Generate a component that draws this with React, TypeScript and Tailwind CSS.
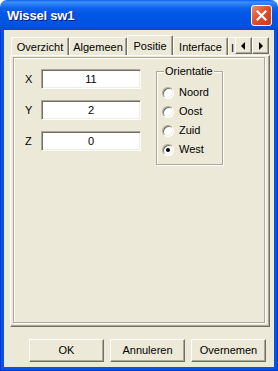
import React from 'react';

const ui = "font-['Liberation_Sans',Arial,sans-serif] text-[11px] text-black";

function Field({ value }: { value: string }) {
  return (
    <div className="w-[100px] h-[20px] bg-white border border-[#ACA899] border-r-white border-b-white shadow-[inset_1px_1px_0_#716F64,inset_-1px_-1px_0_#F1EFE2] flex items-center justify-center">
      {value}
    </div>
  );
}

function Radio({ label, checked }: { label: string; checked?: boolean }) {
  return (
    <div className="h-[19px] flex items-center gap-[5px]">
      <div className="w-[12px] h-[12px] rounded-full bg-white border border-[#ACA899] border-r-white border-b-white shadow-[inset_1px_1px_0_#716F64,inset_-1px_-1px_0_#F1EFE2] flex items-center justify-center">
        {checked && <div className="w-[4px] h-[4px] rounded-full bg-black" />}
      </div>
      <span>{label}</span>
    </div>
  );
}

function Tab({ label, w, active }: { label: string; w: string; active?: boolean }) {
  if (active) {
    return (
      <div className={`${w} h-[22px] -mb-[2px] relative z-10 shrink-0 bg-[#ECE9D8] border-l border-t border-white border-r border-r-[#716F64] rounded-t-[2px] shadow-[inset_-1px_0_0_#ACA899] flex justify-center pt-[2px]`}>
        {label}
      </div>
    );
  }
  return (
    <div className={`${w} h-[18px] shrink-0 bg-[#ECE9D8] border-l border-t border-white border-r border-r-[#716F64] rounded-t-[2px] shadow-[inset_-1px_0_0_#ACA899] flex justify-center items-center pt-[1px]`}>
      {label}
    </div>
  );
}

function ArrowBtn({ dir }: { dir: 'left' | 'right' }) {
  return (
    <div className="w-[17px] h-[17px] bg-[#ECE9D8] border border-white border-r-[#716F64] border-b-[#716F64] shadow-[inset_-1px_-1px_0_#ACA899] flex items-center justify-center">
      <svg width="5" height="8" viewBox="0 0 5 8">
        {dir === 'left' ? <path d="M4 0 L4 8 L0 4 Z" fill="#000" /> : <path d="M1 0 L1 8 L5 4 Z" fill="#000" />}
      </svg>
    </div>
  );
}

function Btn({ label }: { label: string }) {
  return (
    <button className="w-[75px] h-[23px] bg-[#ECE9D8] border border-white border-r-[#716F64] border-b-[#716F64] shadow-[inset_-1px_-1px_0_#ACA899] flex items-center justify-center">
      {label}
    </button>
  );
}

export default function App() {
  return (
    <div className={`w-[278px] h-[371px] flex flex-col rounded-t-[7px] overflow-hidden ${ui}`}>
      {/* Titelbalk */}
      <div className="h-[30px] shrink-0 flex items-center justify-between pl-[7px] pr-[6px] bg-[linear-gradient(to_bottom,#0A5FE6_0px,#3D8FF9_2px,#2B80F5_4px,#0E63EB_8px,#0057E6_14px,#0054E2_22px,#0051DC_27px,#0048CC_30px)]">
        <span className="text-[13px] font-bold text-white tracking-[-0.2px] pt-[2px] [text-shadow:1px_1px_0_#0A1883]">
          Wissel sw1
        </span>
        <div className="w-[21px] h-[21px] rounded-[3px] border border-white bg-[linear-gradient(135deg,#EE8B6E_0%,#E0502E_45%,#C8391A_100%)] flex items-center justify-center">
          <svg width="11" height="11" viewBox="0 0 11 11">
            <path d="M1.5 1.5 L9.5 9.5 M9.5 1.5 L1.5 9.5" stroke="#fff" strokeWidth="2.2" strokeLinecap="square" />
          </svg>
        </div>
      </div>

      {/* Venster */}
      <div className="flex-1 flex flex-col bg-[#0055E5] border-x border-b border-[#0831D9] px-[3px] pb-[3px]">
        <div className="flex-1 flex flex-col bg-[#ECE9D8] pt-[5px] pl-[6px] pr-[4px] pb-[5px]">
          {/* Tabs */}
          <div className="h-[20px] flex items-end pl-[1px]">
            <div className="flex-1 flex items-end overflow-hidden h-[22px] -mt-[2px]">
              <Tab label="Overzicht" w="w-[58px]" />
              <Tab label="Algemeen" w="w-[58px]" />
              <Tab label="Positie" w="w-[46px]" active />
              <Tab label="Interface" w="w-[55px]" />
              <div className="h-[18px] shrink-0 w-[20px] border-l border-t border-white pl-[2px] pt-[2px]">I</div>
            </div>
            <div className="flex self-start mt-[2px] mr-[1px]">
              <ArrowBtn dir="left" />
              <ArrowBtn dir="right" />
            </div>
          </div>

          {/* Tabblad */}
          <div className="h-[272px] border border-white border-r-[#716F64] border-b-[#716F64] shadow-[inset_-1px_-1px_0_#ACA899] pt-[1px] pl-[2px] pr-[4px] pb-[3px] flex">
            <div className="flex-1 border border-[#ACA899] shadow-[inset_1px_1px_0_#fff,1px_1px_0_#fff] pt-[11px] pl-[11px] flex items-start">
              <div className="flex flex-col gap-[11px]">
                {[
                  ['X', '11'],
                  ['Y', '2'],
                  ['Z', '0'],
                ].map(([l, v]) => (
                  <div key={l} className="flex items-center h-[20px]">
                    <span className="w-[16px]">{l}</span>
                    <Field value={v} />
                  </div>
                ))}
              </div>

              <div className="relative ml-[15px] mt-[2px] w-[67px] h-[94px] border border-[#ACA899] shadow-[inset_1px_1px_0_#fff,1px_1px_0_#fff] pt-[11px] pl-[5px]">
                <span className="absolute left-[7px] -top-[7px] leading-[13px] px-[1px] bg-[#ECE9D8]">Orientatie</span>
                <Radio label="Noord" />
                <Radio label="Oost" />
                <Radio label="Zuid" />
                <Radio label="West" checked />
              </div>
            </div>
          </div>

          {/* Knoppen */}
          <div className="mt-[12px] flex justify-end gap-[6px] pr-[4px]">
            <Btn label="OK" />
            <Btn label="Annuleren" />
            <Btn label="Overnemen" />
          </div>
        </div>
      </div>
    </div>
  );
}
